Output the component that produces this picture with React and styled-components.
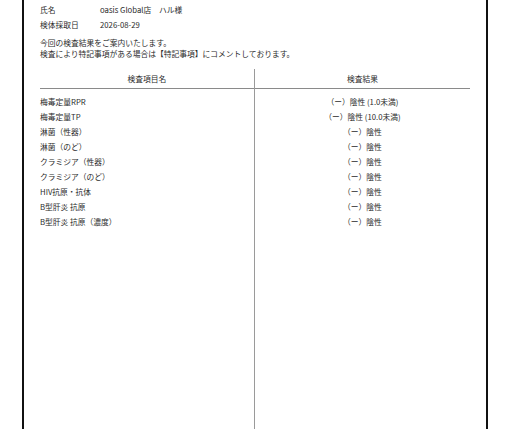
import styled, { createGlobalStyle } from "styled-components";

const GlobalStyle = createGlobalStyle`
  html, body {
    margin: 0;
    padding: 0;
    background: #ffffff;
  }
  body {
    font-family: "Noto Sans CJK JP", "Noto Sans", sans-serif;
    color: #2b2b2b;
  }
`;

const results = [
  { name: "梅毒定量RPR", value: "（ー）陰性 (1.0未満)" },
  { name: "梅毒定量TP", value: "（ー）陰性 (10.0未満)" },
  { name: "淋菌（性器）", value: "（ー）陰性" },
  { name: "淋菌（のど）", value: "（ー）陰性" },
  { name: "クラミジア（性器）", value: "（ー）陰性" },
  { name: "クラミジア（のど）", value: "（ー）陰性" },
  { name: "HIV抗原・抗体", value: "（ー）陰性" },
  { name: "B型肝炎 抗原", value: "（ー）陰性" },
  { name: "B型肝炎 抗原（濃度）", value: "（ー）陰性" },
];

export default function App() {
  return (
    <>
      <GlobalStyle />
      <Page>
        <Sheet>
          <InfoRow>
            <Label>氏名</Label>
            <Value>oasis Global店　ハル様</Value>
          </InfoRow>
          <InfoRow>
            <Label>検体採取日</Label>
            <Value>2026-08-29</Value>
          </InfoRow>
          <Notice>
            今回の検査結果をご案内いたします。
            <br />
            検査により特記事項がある場合は【特記事項】にコメントしております。
          </Notice>
          <Table>
            <Column divider>
              <HeadCell>検査項目名</HeadCell>
              <Body>
                {results.map((r) => (
                  <Cell key={r.name}>{r.name}</Cell>
                ))}
              </Body>
            </Column>
            <Column>
              <HeadCell>検査結果</HeadCell>
              <Body>
                {results.map((r) => (
                  <Cell key={r.name} center>
                    {r.value}
                  </Cell>
                ))}
              </Body>
            </Column>
          </Table>
        </Sheet>
      </Page>
    </>
  );
}

const Page = styled.div`
  height: 429px;
  padding: 0 22px;
  box-sizing: border-box;
  display: flex;
`;

const Sheet = styled.div`
  flex: 1;
  display: flex;
  flex-direction: column;
  border-left: 2px solid #111;
  border-right: 2px solid #111;
  padding: 2px 16px 0 16px;
  font-size: 7.75px;
`;

const InfoRow = styled.div`
  display: flex;
  align-items: center;
  height: 15px;
`;

const Label = styled.div`
  width: 60px;
`;

const Value = styled.div``;

const Notice = styled.p`
  margin: 5px 0 0;
  line-height: 11px;
`;

const Table = styled.div`
  flex: 1;
  margin-top: 10px;
  display: grid;
  grid-template-columns: 1fr 1fr;
`;

const Column = styled.div`
  display: flex;
  flex-direction: column;
  border-right: ${(p) => (p.divider ? "1px solid #9a9a9a" : "none")};
`;

const HeadCell = styled.div`
  height: 19px;
  display: flex;
  align-items: center;
  justify-content: center;
  border-bottom: 1px solid #8a8a8a;
`;

const Body = styled.div`
  padding-top: 5px;
`;

const Cell = styled.div`
  height: 15px;
  display: flex;
  align-items: center;
  justify-content: ${(p) => (p.center ? "center" : "flex-start")};
`;
